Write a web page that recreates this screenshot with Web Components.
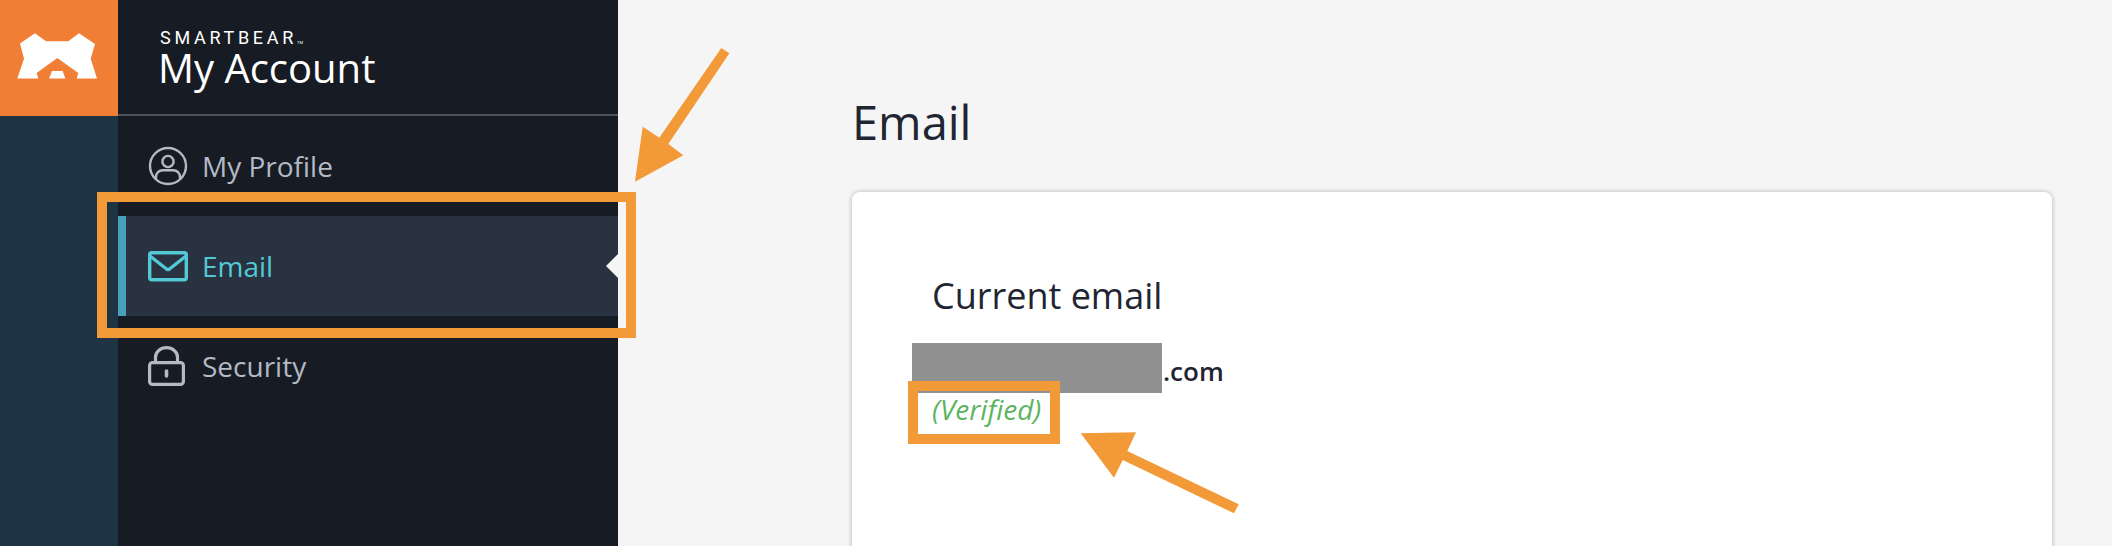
<!DOCTYPE html>
<html lang="en">
<head>
<meta charset="utf-8">
<title>My Account - Email</title>
<style>
  html, body { margin: 0; height: 100%; overflow: hidden; background: #f5f5f5; }
  body { font-family: "Open Sans", "Noto Sans", sans-serif; color: #1f2532; }
</style>
</head>
<body>
<account-shell>
  <account-sidebar slot="sidebar" product="My Account">
    <nav-item label="My Profile" icon="profile"></nav-item>
    <nav-item label="Email" icon="email" active></nav-item>
    <nav-item label="Security" icon="lock"></nav-item>
  </account-sidebar>
  <email-page heading="Email">
    <email-card label="Current email" domain=".com" status="(Verified)"></email-card>
  </email-page>
</account-shell>
<callout-marks></callout-marks>

<script>
const icons = {
  profile: `<svg width="40" height="40" viewBox="0 0 40 40" fill="none" stroke="currentColor" stroke-width="2.4">
    <circle cx="20" cy="20" r="18"/>
    <circle cx="20" cy="15.500" r="5.600"/>
    <path d="M8 33v-2c0-4 3-6.800 6.800-6.800h10.400c3.800 0 6.800 2.800 6.800 6.800v2"/>
  </svg>`,
  email: `<svg width="40" height="40" viewBox="0 0 40 40" fill="none" stroke="currentColor" stroke-width="3.400" stroke-linejoin="round">
    <rect x="1.700" y="6.700" width="36.600" height="27" rx="2"/>
    <path d="M2 10l16.500 13c1 .7 2 .7 3 0L38 10"/>
  </svg>`,
  lock: `<svg width="40" height="40" viewBox="0 0 40 40" fill="none" stroke="currentColor" stroke-width="3.200">
    <path d="M7.500 17v-5.800a11 9.500 0 0 1 22 0V17"/>
    <rect x="1.600" y="16.600" width="33.800" height="21.800" rx="3"/>
    <path d="M18.500 25v5" stroke-width="3.600" stroke-linecap="round"/>
  </svg>`
};

class AccountShell extends HTMLElement {
  constructor() {
    super();
    this.attachShadow({ mode: "open" });
    this.shadowRoot.innerHTML = `
      <style>
        :host { display: grid; grid-template-columns: 118px 500px 1fr; height: 546px; overflow: hidden; }
        .rail { background: #1e3344; }
        .logo { height: 116px; background: #f07e35; }
        .logo svg { display: block; }
      </style>
      <div class="rail">
        <div class="logo">
          <svg width="118" height="116" viewBox="0 0 118 116">
            <path fill="#fff" d="M20 43.500L35 33.300 46 41.300H68.300L79 33.300 95 44 90.700 58.700 97 78.500H76.700L78.300 73 57.300 58 36.700 73 38.300 78.500H17.300L24 58.700Z"/>
            <path fill="#fff" d="M52 71H62.700L65.300 78.500H49Z"/>
          </svg>
        </div>
      </div>
      <slot name="sidebar"></slot>
      <slot></slot>
    `;
  }
}

class AccountSidebar extends HTMLElement {
  constructor() {
    super();
    this.attachShadow({ mode: "open" });
    this.shadowRoot.innerHTML = `
      <style>
        :host { display: block; background: #171c24; color: #fff; }
        header { box-sizing: border-box; height: 116px; padding: 29px 0 0 40px; border-bottom: 2px solid #4a5262; }
        .brand { font: 400 18px/18px "Roboto", sans-serif; letter-spacing: 3.700px; display: flex; padding-left: 2px; height: 18px; }
        .brand small { font-size: 4px; letter-spacing: 0; align-self: flex-end; line-height: 8px; }
        .product { font-size: 40px; line-height: 42px; }
      </style>
      <header>
        <div class="brand">SMARTBEAR<small>TM</small></div>
        <div class="product"></div>
      </header>
      <slot></slot>
    `;
    this.shadowRoot.querySelector(".product").textContent = this.getAttribute("product");
  }
}

class NavItem extends HTMLElement {
  constructor() {
    super();
    this.attachShadow({ mode: "open" });
    this.shadowRoot.innerHTML = `
      <style>
        :host { display: flex; align-items: center; gap: 14px; box-sizing: border-box; height: 100px; padding-left: 30px; color: #b4b9c5; font-size: 28px; position: relative; }
        :host([active]) { background: #293241; color: #54c8d4; border-left: 8px solid #47a0b5; padding-left: 22px; }
        :host([active])::after { content: ""; position: absolute; right: 0; top: 38px; border: solid transparent; border-width: 12px 12px 12px 0; border-right-color: #f5f5f5; }
        .icon { width: 40px; height: 40px; }
        svg { display: block; }
      </style>
      <span class="icon"></span><span class="label"></span>
    `;
    this.shadowRoot.querySelector(".icon").innerHTML = icons[this.getAttribute("icon")];
    this.shadowRoot.querySelector(".label").textContent = this.getAttribute("label");
  }
}

class EmailPage extends HTMLElement {
  constructor() {
    super();
    this.attachShadow({ mode: "open" });
    this.shadowRoot.innerHTML = `
      <style>
        :host { display: block; padding: 0 60px 0 234px; }
        h1 { margin: 0; padding: 90px 0 0 0; height: 192px; box-sizing: border-box; font-size: 47px; line-height: 64px; font-weight: 400; color: #1f2532; }
      </style>
      <h1></h1>
      <slot></slot>
    `;
    this.shadowRoot.querySelector("h1").textContent = this.getAttribute("heading");
  }
}

class EmailCard extends HTMLElement {
  constructor() {
    super();
    this.attachShadow({ mode: "open" });
    this.shadowRoot.innerHTML = `
      <style>
        :host { display: block; height: 500px; box-sizing: border-box; padding: 79px 0 0 60px; background: #fff; border-radius: 8px; box-shadow: 0 0 5px rgba(0,0,0,.28); }
        .label { font-size: 36px; line-height: 50px; color: #1f2532; padding-left: 20px; }
        .address { display: flex; align-items: flex-end; height: 50px; margin-top: 22px; font-size: 26px; font-weight: 600; line-height: 36px; }
        .redacted { width: 250px; height: 50px; background: #919191; flex: none; }
        .address span { margin: 0 0 4px 1px; }
        .status { font-style: italic; font-size: 28px; line-height: 38px; color: #5bb55f; padding-left: 20px; margin-top: -3px; }
      </style>
      <div class="label"></div>
      <div class="address"><div class="redacted"></div><span class="domain"></span></div>
      <div class="status"></div>
    `;
    this.shadowRoot.querySelector(".label").textContent = this.getAttribute("label");
    this.shadowRoot.querySelector(".domain").textContent = this.getAttribute("domain");
    this.shadowRoot.querySelector(".status").textContent = this.getAttribute("status");
  }
}

// orange annotations drawn on top of the screenshot
class CalloutMarks extends HTMLElement {
  constructor() {
    super();
    this.attachShadow({ mode: "open" });
    this.shadowRoot.innerHTML = `
      <style>
        :host { position: absolute; inset: 0; pointer-events: none; }
        svg { display: block; }
      </style>
      <svg width="2112" height="546" viewBox="0 0 2112 546" fill="#f29a38">
        <path fill-rule="evenodd" d="M97 192H636V338H97ZM107 202V328H626V202Z"/>
        <path fill-rule="evenodd" d="M908 381H1060V444H908ZM918 391V434H1050V391Z"/>
        <path d="M721.300 48L729.300 53.300 668.300 144 683.300 155.300 635 181.700 642.700 126.700 659.300 137.700Z"/>
        <path d="M1238.700 504.300L1234 513.300 1122.700 460 1114 477.700 1080.700 433.300 1136 432.300 1127.300 451Z"/>
      </svg>
    `;
  }
}

customElements.define("account-shell", AccountShell);
customElements.define("account-sidebar", AccountSidebar);
customElements.define("nav-item", NavItem);
customElements.define("email-page", EmailPage);
customElements.define("email-card", EmailCard);
customElements.define("callout-marks", CalloutMarks);
</script>
</body>
</html>
